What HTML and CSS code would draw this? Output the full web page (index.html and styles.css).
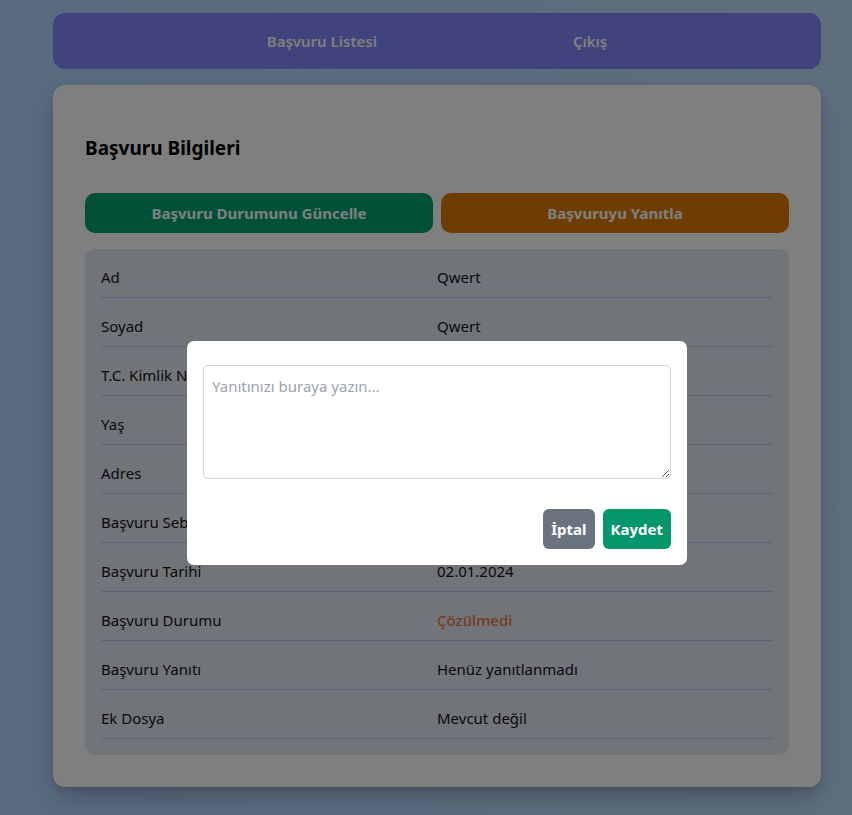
FILE: index.html
```html
<!DOCTYPE html>
<html lang="tr">
<head>
<meta charset="utf-8">
<title>Başvuru Bilgileri</title>
<link rel="stylesheet" href="styles.css">
</head>
<body>
<div class="page">
  <nav class="navbar">
    <a class="nav-link" href="#">Başvuru Listesi</a>
    <a class="nav-link" href="#">Çıkış</a>
  </nav>
  <main class="card">
    <h2 class="card-title">Başvuru Bilgileri</h2>
    <div class="actions">
      <button class="btn btn-green">Başvuru Durumunu Güncelle</button>
      <button class="btn btn-orange">Başvuruyu Yanıtla</button>
    </div>
    <div class="details">
      <div class="row"><span class="label">Ad</span><span class="value">Qwert</span></div>
      <div class="row"><span class="label">Soyad</span><span class="value">Qwert</span></div>
      <div class="row"><span class="label">T.C. Kimlik No</span><span class="value">12345678901</span></div>
      <div class="row"><span class="label">Yaş</span><span class="value">25</span></div>
      <div class="row"><span class="label">Adres</span><span class="value">Qwert</span></div>
      <div class="row"><span class="label">Başvuru Sebebi</span><span class="value">Qwert</span></div>
      <div class="row"><span class="label">Başvuru Tarihi</span><span class="value">02.01.2024</span></div>
      <div class="row"><span class="label">Başvuru Durumu</span><span class="value status">Çözülmedi</span></div>
      <div class="row"><span class="label">Başvuru Yanıtı</span><span class="value">Henüz yanıtlanmadı</span></div>
      <div class="row"><span class="label">Ek Dosya</span><span class="value">Mevcut değil</span></div>
    </div>
  </main>
</div>
<div class="overlay">
  <div class="modal">
    <textarea class="reply" placeholder="Yanıtınızı buraya yazın..."></textarea>
    <div class="modal-actions">
      <button class="mbtn mbtn-gray">İptal</button>
      <button class="mbtn mbtn-green">Kaydet</button>
    </div>
  </div>
</div>
</body>
</html>
```
FILE: styles.css
```css
* { box-sizing: border-box; }
html, body { margin: 0; padding: 0; height: 100%; }
body {
  font-family: "Noto Sans", "Open Sans", sans-serif;
  background: linear-gradient(to right, #b4d5fe, #bcdcfb);
  color: #111827;
  overflow: hidden;
}
.page {
  width: 768px;
  margin-left: 53px;
  padding-top: 13px;
}
.navbar {
  height: 56px;
  background: #8286f8;
  border-radius: 12px;
  display: flex;
  justify-content: center;
  align-items: center;
  gap: 196px;
  padding-left: 0;
  margin-bottom: 16px;
}
.nav-link {
  color: #ffffff;
  text-decoration: none;
  font-weight: 600;
  font-size: 15px;
  line-height: 24px;
}
.card {
  background: #ffffff;
  border-radius: 12px;
  padding: 32px;
  box-shadow: 0 12px 24px -4px rgba(0,0,0,0.25), 0 4px 8px -2px rgba(0,0,0,0.1);
}
.card-title {
  margin: 17px 0 31px;
  font-size: 19px;
  line-height: 28px;
  font-weight: 700;
  color: #000;
}
.actions {
  display: grid;
  grid-template-columns: 1fr 1fr;
  gap: 8px;
  margin-bottom: 16px;
}
.btn {
  height: 40px;
  border: 0;
  border-radius: 10px;
  color: #ffffff;
  font-family: inherit;
  font-weight: 700;
  font-size: 15px;
}
.btn-green { background: #02a070; }
.btn-orange { background: #dd7b06; }
.details {
  background: #e2e8f0;
  border-radius: 10px;
  padding: 16px;
  display: flex;
  flex-direction: column;
  gap: 16px;
}
.row {
  display: grid;
  grid-template-columns: 1fr 1fr;
  padding-bottom: 8px;
  border-bottom: 1px solid #b6c6fa;
  font-size: 15px;
  line-height: 24px;
  color: #141414;
}
.status { color: #f2743e; font-weight: 500; }
.overlay {
  position: fixed;
  inset: 0;
  background: rgba(0,0,0,0.5);
}
.modal {
  position: absolute;
  left: 187px;
  top: 341px;
  width: 500px;
  background: #ffffff;
  border-radius: 7px;
  padding: 24px 16px 16px;
}
.reply {
  display: block;
  width: 100%;
  height: 114px;
  border: 1px solid #d1d5db;
  border-radius: 5px;
  padding: 8px;
  font-family: inherit;
  font-size: 15px;
  line-height: 24px;
  resize: vertical;
}
.reply::placeholder { color: #9ca3af; }
.modal-actions {
  display: flex;
  justify-content: flex-end;
  gap: 8px;
  margin-top: 30px;
}
.mbtn {
  height: 40px;
  padding: 0 8px;
  border: 0;
  border-radius: 6px;
  color: #ffffff;
  font-family: inherit;
  font-weight: 700;
  font-size: 15px;
}
.mbtn-gray { background: #6b7280; }
.mbtn-green { background: #059669; }
```
